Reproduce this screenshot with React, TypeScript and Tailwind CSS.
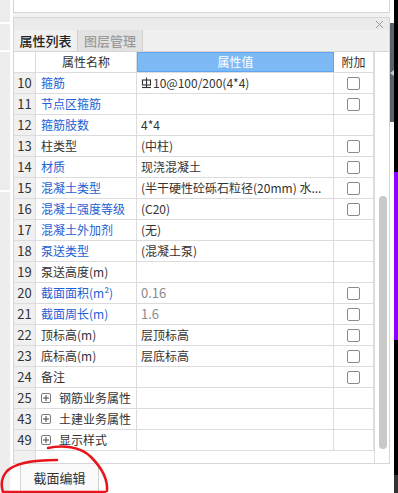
import type { ReactNode } from "react";

type Row = {
  no: number;
  name: string;
  value?: ReactNode;
  blue?: boolean;
  gray?: boolean;
  check?: boolean;
  group?: boolean;
};

function SteelMark() {
  return (
    <svg width="11" height="12" viewBox="0 0 11 12" className="mr-[1px] shrink-0">
      <rect x="1.5" y="3" width="8" height="5" fill="none" stroke="#333" strokeWidth="1.1" />
      <line x1="5.5" y1="0.5" x2="5.5" y2="10.5" stroke="#333" strokeWidth="1.1" />
      <line x1="1" y1="10.5" x2="10" y2="10.5" stroke="#333" strokeWidth="1.1" />
    </svg>
  );
}

const rows: Row[] = [
  {
    no: 10,
    name: "箍筋",
    blue: true,
    check: true,
    value: (
      <span className="flex items-center">
        <SteelMark />
        10@100/200(4*4)
      </span>
    ),
  },
  { no: 11, name: "节点区箍筋", blue: true, check: true },
  { no: 12, name: "箍筋肢数", blue: true, value: "4*4" },
  { no: 13, name: "柱类型", check: true, value: "(中柱)" },
  { no: 14, name: "材质", blue: true, check: true, value: "现浇混凝土" },
  { no: 15, name: "混凝土类型", blue: true, check: true, value: "(半干硬性砼砾石粒径(20mm) 水..." },
  { no: 16, name: "混凝土强度等级", blue: true, check: true, value: "(C20)" },
  { no: 17, name: "混凝土外加剂", blue: true, value: "(无)" },
  { no: 18, name: "泵送类型", blue: true, value: "(混凝土泵)" },
  { no: 19, name: "泵送高度(m)" },
  { no: 20, name: "截面面积(m²)", blue: true, gray: true, check: true, value: "0.16" },
  { no: 21, name: "截面周长(m)", blue: true, gray: true, check: true, value: "1.6" },
  { no: 22, name: "顶标高(m)", check: true, value: "层顶标高" },
  { no: 23, name: "底标高(m)", check: true, value: "层底标高" },
  { no: 24, name: "备注", check: true },
  { no: 25, name: "钢筋业务属性", group: true },
  { no: 43, name: "土建业务属性", group: true },
  { no: 49, name: "显示样式", group: true },
];

function PlusBox() {
  return (
    <span className="mr-[8px] flex h-[10px] w-[10px] shrink-0 items-center justify-center rounded-[2px] border border-[#7a7a7a]">
      <svg width="6" height="6" viewBox="0 0 6 6">
        <line x1="3" y1="0" x2="3" y2="6" stroke="#444" strokeWidth="1" />
        <line x1="0" y1="3" x2="6" y2="3" stroke="#444" strokeWidth="1" />
      </svg>
    </span>
  );
}

export default function App() {
  return (
    <div
      className="relative flex h-[493px] w-[398px] overflow-hidden bg-white text-[12px] text-[#333]"
      style={{ fontFamily: '"Noto Sans CJK SC", "Noto Sans", sans-serif' }}
    >
      {/* left strip */}
      <div className="flex w-[13px] shrink-0 flex-col">
        <div className="flex w-[10px] flex-1 flex-col bg-[#ededed]">
          <div className="h-[22px]" />
          <div className="h-[2px] bg-white" />
          <div className="h-[26px]" />
          <div className="h-[2px] bg-white" />
          <div className="h-[138px]" />
          <div className="h-[2px] bg-white" />
          <div className="flex-1" />
        </div>
      </div>

      {/* main column */}
      <div className="flex w-[377px] shrink-0 flex-col">
        <div className="h-[13px] border-x border-b border-[#d6d6d6] bg-white" />
        <div className="h-[4px] bg-[#f2f2f2]" />

        <div className="flex flex-col border border-[#d6d6d6] bg-white">
          {/* title bar */}
          <div className="flex h-[12px] items-center justify-end bg-[#ebebeb] pr-[6px]">
            <svg width="7" height="7" viewBox="0 0 7 7">
              <line x1="0" y1="0" x2="7" y2="7" stroke="#9a9a9a" strokeWidth="1" />
              <line x1="7" y1="0" x2="0" y2="7" stroke="#9a9a9a" strokeWidth="1" />
            </svg>
          </div>

          {/* tabs */}
          <div className="flex h-[22px] border-b border-[#d6d6d6] bg-[#f0f0f0]">
            <div className="flex w-[64px] items-center justify-center border-r border-[#d0d0d0] bg-[#f0f0f0] text-[13px] font-medium text-[#222]">
              属性列表
            </div>
            <div className="flex w-[65px] items-center justify-center border-r border-[#d0d0d0] bg-[#e2e2e2] text-[13px] font-medium text-[#9a9a9a]">
              图层管理
            </div>
          </div>

          {/* table area */}
          <div className="flex">
            <div className="flex w-[360px] flex-col">
              {/* header */}
              <div className="flex h-[21px] border-b border-[#dcdcdc]">
                <div className="w-[22px] border-r border-[#dcdcdc]" />
                <div className="flex w-[101px] items-center justify-center border-r border-[#dcdcdc]">
                  属性名称
                </div>
                <div className="flex w-[197px] items-center justify-center border border-[#5fa6ee] bg-[#7db9f5] text-white">
                  属性值
                </div>
                <div className="flex w-[40px] items-center justify-center border-r border-[#dcdcdc]">
                  附加
                </div>
              </div>

              {rows.map((r) => (
                <div key={r.no} className="flex h-[21px] border-b border-[#dcdcdc]">
                  <div className="flex w-[22px] items-center justify-center border-r border-[#dcdcdc] bg-[#f0f0f0] text-[13px]">
                    {r.no}
                  </div>
                  <div
                    className={
                      r.blue
                        ? "flex w-[101px] items-center whitespace-nowrap border-r border-[#dcdcdc] pl-[5px] text-[#1d5fd4]"
                        : "flex w-[101px] items-center whitespace-nowrap border-r border-[#dcdcdc] pl-[5px]"
                    }
                  >
                    {r.group && <PlusBox />}
                    {r.name}
                  </div>
                  <div
                    className={
                      r.gray
                        ? "flex w-[197px] items-center overflow-hidden whitespace-nowrap border-r border-[#dcdcdc] pl-[4px] text-[13px] text-[#8c8c8c]"
                        : "flex w-[197px] items-center overflow-hidden whitespace-nowrap border-r border-[#dcdcdc] pl-[4px]"
                    }
                  >
                    {r.value}
                  </div>
                  <div className="flex w-[40px] items-center justify-center border-r border-[#dcdcdc]">
                    {r.check && (
                      <span className="h-[13px] w-[13px] rounded-[2px] border border-[#8a8a8a] bg-white" />
                    )}
                  </div>
                </div>
              ))}

              {/* footer */}
              <div className="flex h-[12px]">
                <div className="w-[22px] border-r border-[#dcdcdc] bg-[#f0f0f0]" />
              </div>
            </div>

            {/* scroll column */}
            <div className="flex w-[15px] flex-col border-l border-[#dcdcdc] pl-[4px] pt-[144px]">
              <div className="h-[253px] w-[8px] rounded-full bg-[#c9c9c9]" />
            </div>
          </div>
        </div>

        {/* bottom tab */}
        <div className="flex pl-[7px]">
          <div className="flex h-[27px] w-[79px] items-center justify-center border-x border-[#d4d4d4] bg-[#fafafa] text-[13px]">
            截面编辑
          </div>
        </div>
      </div>

      {/* right strip */}
      <div className="flex w-[8px] shrink-0">
        <div className="flex w-[4px] flex-col">
          <div className="h-[23px] bg-white" />
          <div className="relative h-[99px] bg-[#5c6269]">
            <svg width="4" height="6" viewBox="0 0 4 6" className="absolute left-0 top-[47px]">
              <polygon points="4,0 4,6 0,3" fill="#c8c8c8" />
            </svg>
          </div>
          <div className="flex-1 bg-white" />
        </div>
        <div className="flex w-[4px] flex-col">
          <div className="h-[172px] bg-black" />
          <div className="h-[168px] bg-[#8b00ff]" />
          <div className="h-[135px] bg-black" />
          <div className="flex-1 bg-[#333]" />
        </div>
      </div>

      {/* red hand-drawn mark */}
      <svg
        className="pointer-events-none absolute left-0 top-0"
        width="398"
        height="493"
        viewBox="0 0 398 493"
      >
        <path
          d="M48 448 C62 445 80 446 91 457 C100 466 108 478 107 491"
          fill="none"
          stroke="#e8141b"
          strokeWidth="2.5"
          strokeLinecap="round"
        />
        <path
          d="M57 460 C40 460 16 462 7 471 C1 478 1 486 3 492 L105 492"
          fill="none"
          stroke="#e8141b"
          strokeWidth="2.5"
          strokeLinecap="round"
        />
      </svg>
    </div>
  );
}
